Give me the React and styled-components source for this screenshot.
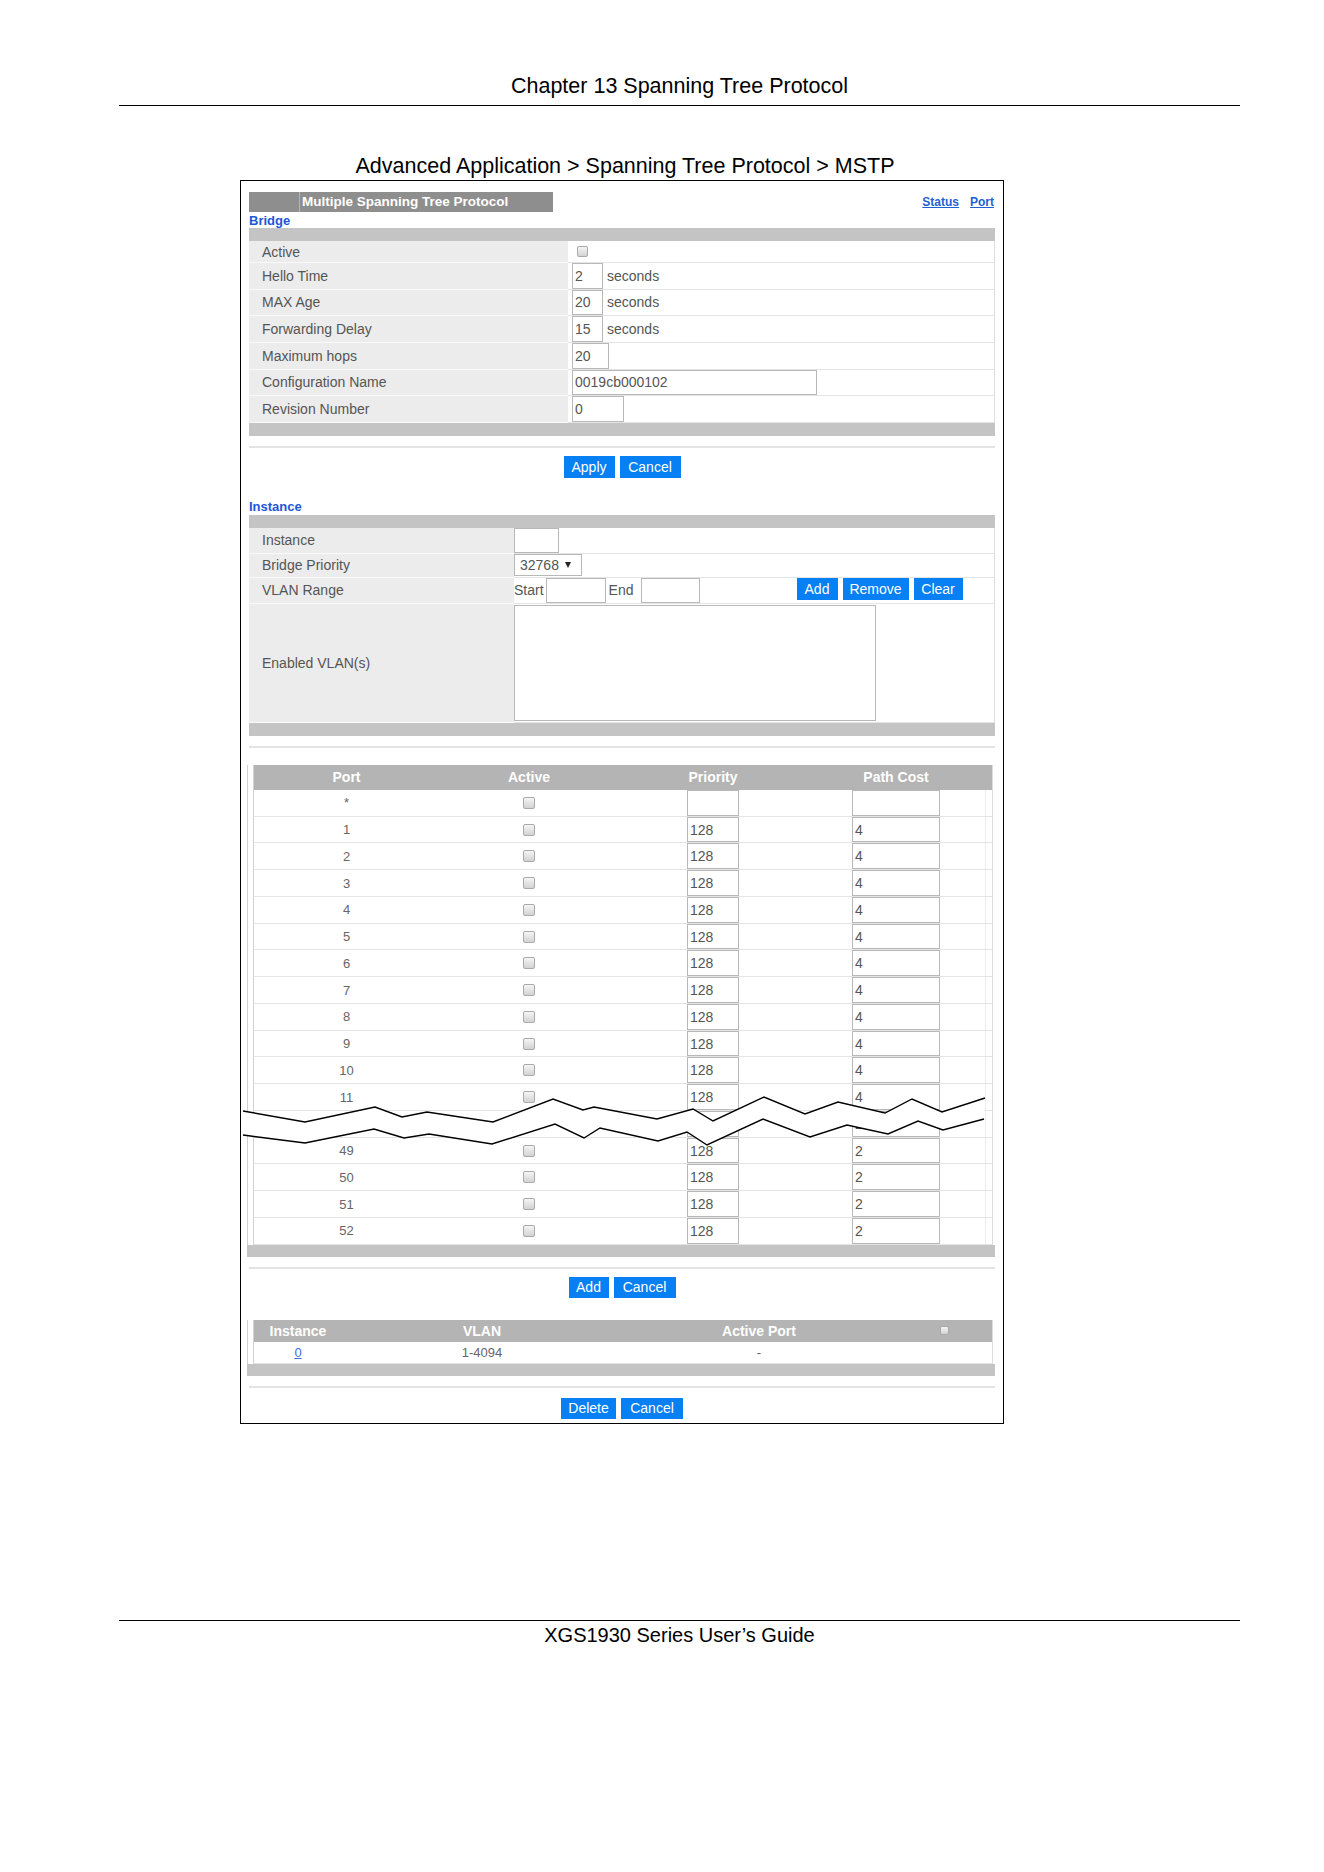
import React from "react"
import styled, { createGlobalStyle } from "styled-components"

const GlobalStyle = createGlobalStyle`
  html, body {
    margin: 0;
    padding: 0;
    background: #fff;
  }
  body {
    font-family: "Liberation Sans", Arial, sans-serif;
    color: #000;
  }
`

const Page = styled.div`
  width: 1324px;
  min-height: 1872px;
  padding: 0 84px 0 119px;
  box-sizing: border-box;
`

const RunningHead = styled.header`
  padding: 74px 0 7px;
  border-bottom: 1px solid #000;
  text-align: center;
  font-size: 21.5px;
  line-height: 24px;
`

const Figure = styled.div`
  width: 764px;
  margin-left: 121px;
`

const Caption = styled.div`
  margin-top: 48px;
  padding-left: 6px;
  text-align: center;
  font-size: 21.5px;
  line-height: 24px;
`

const Frame = styled.div`
  margin-top: 2px;
  border: 1px solid #000;
  padding: 11px 8px 4px;
  font-size: 14px;
  color: #555;
`

const TopBar = styled.div`
  display: flex;
  justify-content: space-between;
  align-items: center;
  height: 20px;
`

const TitleTab = styled.div`
  display: flex;
  width: 304px;
  height: 20px;
  background: #8e8e8e;
`

const TabLead = styled.span`
  width: 50px;
  border-right: 1px solid #b5b5b5;
`

const TabTitle = styled.span`
  padding-left: 2px;
  color: #fff;
  font-weight: bold;
  font-size: 13.5px;
  line-height: 20px;
`

const Links = styled.div`
  display: flex;
  gap: 11px;
  padding-right: 1px;
`

const Link = styled.a`
  color: #1f5fd0;
  font-weight: bold;
  font-size: 12px;
  text-decoration: underline;
`

const SectionTitle = styled.div`
  margin-top: ${(p) => p.$gap}px;
  color: #1d56d8;
  font-weight: bold;
  font-size: 13px;
  line-height: 14px;
`

const Band = styled.div`
  height: ${(p) => p.$h || 13}px;
  margin-top: ${(p) => p.$top || 0}px;
  background: #c4c4c4;
`

const FormTable = styled.div`
  border-right: 1px solid #dedede;
`

const FormRow = styled.div`
  display: grid;
  grid-template-columns: ${(p) => p.$label}px 1fr;
  height: ${(p) => p.$h}px;
  box-sizing: border-box;
  border-bottom: 1px solid #e4e4e4;
`

const Label = styled.div`
  display: flex;
  align-items: center;
  padding-left: 13px;
  background: #ececec;
  border-bottom: 1px solid #fafafa;
  margin-bottom: -1px;
`

const Value = styled.div`
  display: flex;
  align-items: stretch;
  padding-left: ${(p) => p.$pad || 0}px;
`

const TextBox = styled.input`
  width: ${(p) => p.$w}px;
  box-sizing: border-box;
  margin: 0;
  padding: 0 2px;
  border: 1px solid #b8b8b8;
  background: #fff;
  font-family: inherit;
  font-size: 14px;
  color: #555;
  outline: none;
`

const Unit = styled.span`
  display: flex;
  align-items: center;
  padding-left: 4px;
`

const Check = styled.span`
  display: inline-block;
  width: ${(p) => p.$size || 11}px;
  height: ${(p) => p.$size || 11}px;
  box-sizing: border-box;
  border: 1px solid #a9a9a9;
  border-radius: 2px;
  background: linear-gradient(#f5f5f5, #d2d2d2);
`

const CheckSlot = styled.div`
  display: flex;
  align-items: center;
  padding-left: 9px;
`

const Select = styled.div`
  display: flex;
  align-items: center;
  width: 68px;
  height: 22px;
  align-self: center;
  box-sizing: border-box;
  padding-left: 5px;
  border: 1px solid #b8b8b8;
  font-size: 14px;
`

const Caret = styled.span`
  margin-left: 6px;
  border-left: 3.5px solid transparent;
  border-right: 3.5px solid transparent;
  border-top: 6px solid #222;
`

const InlineLabel = styled.span`
  display: flex;
  align-items: center;
  padding: 0 ${(p) => p.$right || 2}px 0 ${(p) => p.$left || 0}px;
`

const Spacer = styled.span`
  width: ${(p) => p.$w}px;
`

const VlanList = styled.textarea`
  width: 362px;
  height: 116px;
  margin: 1px 0 0;
  box-sizing: border-box;
  border: 1px solid #b8b8b8;
  resize: none;
  outline: none;
`

const ButtonBar = styled.div`
  display: flex;
  justify-content: center;
  gap: 5px;
  margin-top: ${(p) => p.$top || 0}px;
`

const Button = styled.button`
  width: ${(p) => p.$w}px;
  height: ${(p) => p.$h || 22}px;
  margin: 0;
  padding: 0;
  border: none;
  background: #0680f2;
  color: #fff;
  font-family: inherit;
  font-size: 14px;
  cursor: pointer;
`

const Separator = styled.div`
  height: 2px;
  margin-top: 10px;
  background: #e3e3e3;
`

const ListTable = styled.div`
  width: 748px;
  margin: ${(p) => p.$top}px 0 0 -2px;
`

const ListOuter = styled.div`
  position: relative;
  padding-left: 5px;
  border-left: 1px solid #d2d2d2;
`

const ListInner = styled.div`
  margin-right: 2px;
  border-left: 1px solid #d2d2d2;
  border-right: 1px solid #dcdcdc;
`

const GridRow = styled.div`
  display: grid;
  grid-template-columns: ${(p) => p.$cols};
  height: ${(p) => p.$h}px;
  box-sizing: border-box;
  border-bottom: 1px solid #e4e4e4;
  font-size: 13px;
  color: #666;
`

const HeadRow = styled(GridRow)`
  background: #b4b4b4;
  border-bottom: none;
  color: #fff;
  font-weight: bold;
  font-size: 14px;
`

const Cell = styled.div`
  display: flex;
  justify-content: center;
  align-items: ${(p) => (p.$fill ? "stretch" : "center")};
`

const EdgeCell = styled.div`
  border-left: 1px solid #ececec;
`

const IndexLink = styled.a`
  color: #3a6fd8;
  text-decoration: underline;
`

const BreakMark = styled.svg`
  position: absolute;
  left: -8px;
  top: 326px;
  overflow: visible;
`

const FootRule = styled.footer`
  margin-top: 196px;
  padding-top: 2px;
  border-top: 1px solid #000;
  text-align: center;
  font-size: 20px;
  line-height: 24px;
`

const bridgeRows = [
  { label: "Hello Time", value: "2", w: 31, unit: "seconds" },
  { label: "MAX Age", value: "20", w: 31, unit: "seconds" },
  { label: "Forwarding Delay", value: "15", w: 31, unit: "seconds" },
  { label: "Maximum hops", value: "20", w: 37 },
  { label: "Configuration Name", value: "0019cb000102", w: 245 },
  { label: "Revision Number", value: "0", w: 52 },
]

const ports = [
  { port: "*", priority: "", cost: "" },
  ...Array.from({ length: 11 }, (_, i) => ({ port: String(i + 1), priority: "128", cost: "4" })),
  ...[48, 49, 50, 51, 52].map((n) => ({ port: String(n), priority: "128", cost: "2" })),
]

const portCols = "185px 180px 188px 178px 1fr"
const instanceCols = "88px 280px 274px 1fr"

// zigzag edges of the "rows omitted" cut through the port table
const topEdge = [
  [3, 20], [65, 31], [135, 16], [162, 26], [187, 21], [253, 31], [313, 8], [343, 19],
  [354, 16], [417, 28], [453, 18], [473, 30], [524, 6], [565, 23], [598, 11], [645, 22],
  [672, 8], [702, 21], [745, 7],
]
const bottomEdge = [
  [3, 44], [65, 52], [134, 38], [164, 47], [189, 43], [252, 53], [315, 33], [344, 47],
  [360, 37], [418, 50], [447, 41], [467, 54], [523, 28], [570, 46], [607, 34], [648, 43],
  [678, 30], [703, 39], [744, 28],
]
const pts = (list) => list.map(([x, y]) => `${x},${y}`).join(" ")

const TableBreak = () => (
  <BreakMark width="760" height="60" viewBox="0 0 760 60">
    <polygon points={pts([...topEdge, ...[...bottomEdge].reverse()])} fill="#fff" />
    <polyline points={pts(topEdge)} fill="none" stroke="#000" strokeWidth="1.4" />
    <polyline points={pts(bottomEdge)} fill="none" stroke="#000" strokeWidth="1.4" />
  </BreakMark>
)

const App = () => (
  <Page>
    <GlobalStyle />
    <RunningHead>Chapter 13 Spanning Tree Protocol</RunningHead>

    <Figure>
      <Caption>Advanced Application &gt; Spanning Tree Protocol &gt; MSTP</Caption>

      <Frame>
        <TopBar>
          <TitleTab>
            <TabLead />
            <TabTitle>Multiple Spanning Tree Protocol</TabTitle>
          </TitleTab>
          <Links>
            <Link href="#status">Status</Link>
            <Link href="#port">Port</Link>
          </Links>
        </TopBar>

        <SectionTitle $gap={2}>Bridge</SectionTitle>
        <Band />
        <FormTable>
          <FormRow $label={319} $h={22}>
            <Label>Active</Label>
            <CheckSlot>
              <Check />
            </CheckSlot>
          </FormRow>
          {bridgeRows.map((r) => (
            <FormRow key={r.label} $label={319} $h={26.67}>
              <Label>{r.label}</Label>
              <Value $pad={4}>
                <TextBox $w={r.w} defaultValue={r.value} />
                {r.unit && <Unit>{r.unit}</Unit>}
              </Value>
            </FormRow>
          ))}
        </FormTable>
        <Band />
        <Separator />
        <ButtonBar $top={8}>
          <Button $w={51}>Apply</Button>
          <Button $w={61}>Cancel</Button>
        </ButtonBar>

        <SectionTitle $gap={22}>Instance</SectionTitle>
        <Band $top={1} />
        <FormTable>
          <FormRow $label={265} $h={26}>
            <Label>Instance</Label>
            <Value>
              <TextBox $w={45} />
            </Value>
          </FormRow>
          <FormRow $label={265} $h={24}>
            <Label>Bridge Priority</Label>
            <Value>
              <Select>
                32768
                <Caret />
              </Select>
            </Value>
          </FormRow>
          <FormRow $label={265} $h={26}>
            <Label>VLAN Range</Label>
            <Value>
              <InlineLabel>Start</InlineLabel>
              <TextBox $w={60} />
              <InlineLabel $left={3} $right={7}>End</InlineLabel>
              <TextBox $w={59} />
              <Spacer $w={97} />
              <ButtonBar>
                <Button $w={41}>Add</Button>
                <Button $w={66}>Remove</Button>
                <Button $w={49}>Clear</Button>
              </ButtonBar>
            </Value>
          </FormRow>
          <FormRow $label={265} $h={119}>
            <Label>Enabled VLAN(s)</Label>
            <Value>
              <VlanList />
            </Value>
          </FormRow>
        </FormTable>
        <Band />
        <Separator />

        <ListTable $top={17}>
          <ListOuter>
            <ListInner>
              <HeadRow $cols={portCols} $h={25}>
                <Cell>Port</Cell>
                <Cell>Active</Cell>
                <Cell>Priority</Cell>
                <Cell>Path Cost</Cell>
                <Cell />
              </HeadRow>
              {ports.map((p) => (
                <GridRow key={p.port} $cols={portCols} $h={26.75}>
                  <Cell>{p.port}</Cell>
                  <Cell>
                    <Check $size={12} />
                  </Cell>
                  <Cell $fill>
                    <TextBox $w={52} defaultValue={p.priority} />
                  </Cell>
                  <Cell $fill>
                    <TextBox $w={88} defaultValue={p.cost} />
                  </Cell>
                  <EdgeCell />
                </GridRow>
              ))}
            </ListInner>
            <TableBreak />
          </ListOuter>
          <Band $h={12} />
        </ListTable>
        <Separator />
        <ButtonBar $top={8}>
          <Button $w={40} $h={21}>Add</Button>
          <Button $w={62} $h={21}>Cancel</Button>
        </ButtonBar>

        <ListTable $top={22}>
          <ListOuter>
            <ListInner>
              <HeadRow $cols={instanceCols} $h={22}>
                <Cell>Instance</Cell>
                <Cell>VLAN</Cell>
                <Cell>Active Port</Cell>
                <Cell>
                  <Check $size={9} />
                </Cell>
              </HeadRow>
              <GridRow $cols={instanceCols} $h={22}>
                <Cell>
                  <IndexLink href="#instance-0">0</IndexLink>
                </Cell>
                <Cell>1-4094</Cell>
                <Cell>-</Cell>
                <Cell />
              </GridRow>
            </ListInner>
          </ListOuter>
          <Band $h={12} />
        </ListTable>
        <Separator />
        <ButtonBar $top={10}>
          <Button $w={55} $h={21}>Delete</Button>
          <Button $w={62} $h={21}>Cancel</Button>
        </ButtonBar>
      </Frame>
    </Figure>

    <FootRule>XGS1930 Series User’s Guide</FootRule>
  </Page>
)

export default App
